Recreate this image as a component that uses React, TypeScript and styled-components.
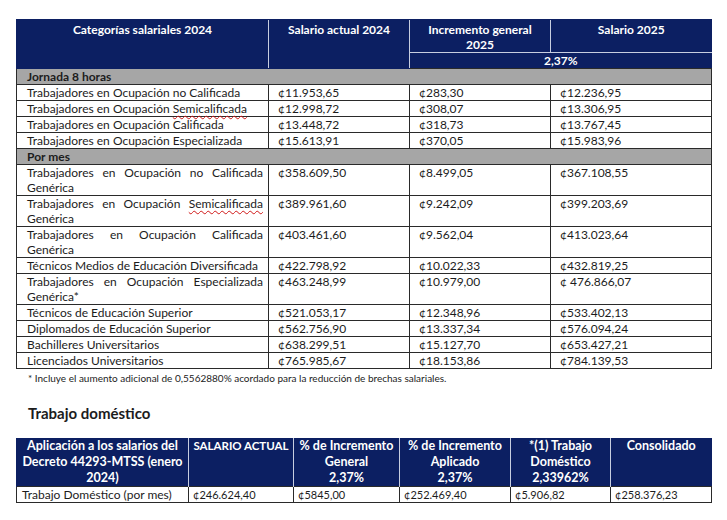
import React from "react";
import styled, { createGlobalStyle } from "styled-components";

const NAVY = "#0c1f62";
const RULE = "#2a2a2a";

const GlobalStyle = createGlobalStyle`
  body {
    margin: 0;
    background: #ffffff;
    font-family: Lato, "Liberation Sans", sans-serif;
    color: #1c1c1c;
  }
`;

const Page = styled.div`
  width: 695px;
  padding: 19px 16px 0 16px;
`;

const Table = styled.table`
  width: 695px;
  border-collapse: collapse;
  table-layout: fixed;
`;

const HeadCell = styled.th<{ $split?: boolean }>`
  background: ${NAVY};
  color: #ffffff;
  font-weight: 700;
  font-size: 12px;
  line-height: 15px;
  text-align: center;
  vertical-align: top;
  padding: 2px 4px 0;
  border-left: 1px solid #c7cde0;
  border-top: 1px solid ${NAVY};
  border-bottom: 1px solid ${props => (props.$split ? "#c7cde0" : NAVY)};
  &:first-child {
    border-left: 1px solid ${NAVY};
  }
`;

const RateCell = styled.th`
  background: ${NAVY};
  color: #ffffff;
  font-weight: 700;
  font-size: 12px;
  line-height: 15px;
  height: 15px;
  text-align: center;
  padding: 0;
  border-left: 1px solid #c7cde0;
  border-bottom: 1px solid ${RULE};
`;

const SectionCell = styled.td`
  background: #a6a6a6;
  font-weight: 700;
  font-size: 12px;
  line-height: 15px;
  height: 15px;
  padding: 0 0 0 10px;
  border: 1px solid ${RULE};
`;

const Cell = styled.td<{ $tall?: boolean }>`
  font-size: 12px;
  line-height: 15px;
  height: ${props => (props.$tall ? "30px" : "15px")};
  padding: 0 5px 0 9px;
  vertical-align: top;
  border: 1px solid ${RULE};
  white-space: nowrap;
`;

const LabelCell = styled(Cell)`
  padding-left: 10px;
  white-space: normal;
`;

const Spread = styled.div`
  text-align: justify;
  text-align-last: justify;
`;

const Typo = styled.span`
  text-decoration: underline wavy #d01818;
  text-decoration-thickness: 1px;
  text-underline-offset: 2px;
`;

const Footnote = styled.p`
  margin: 2px 0 0 12px;
  font-size: 10px;
  line-height: 14px;
`;

const Heading = styled.h2`
  margin: 18px 0 0 12px;
  font-size: 15px;
  line-height: 20px;
  font-weight: 700;
`;

const DomHead = styled.th<{ $single?: boolean }>`
  background: ${NAVY};
  color: #ffffff;
  font-weight: 700;
  font-size: ${props => (props.$single ? "11.5px" : "12.5px")};
  line-height: 16px;
  height: 48px;
  text-align: center;
  vertical-align: top;
  padding: 0 ${props => (props.$single ? "0" : "3px")};
  white-space: ${props => (props.$single ? "nowrap" : "normal")};
  border-left: 1px solid #c7cde0;
  &:first-child {
    border-left: 1px solid ${NAVY};
  }
`;

const DomCell = styled.td<{ $label?: boolean }>`
  font-size: ${props => (props.$label ? "12px" : "11px")};
  line-height: 15px;
  height: 15px;
  padding: 0 0 0 ${props => (props.$label ? "5px" : "4px")};
  border: 1px solid ${RULE};
  white-space: nowrap;
`;

const DomesticTable = styled(Table)`
  margin-top: 15px;
`;

type Row = { label: React.ReactNode; tail?: string; a: string; b: string; c: string };

const daily: Row[] = [
  { label: "Trabajadores en Ocupación no Calificada", a: "¢11.953,65", b: "¢283,30", c: "¢12.236,95" },
  { label: <>Trabajadores en Ocupación <Typo>Semicalificada</Typo></>, a: "¢12.998,72", b: "¢308,07", c: "¢13.306,95" },
  { label: "Trabajadores en Ocupación Calificada", a: "¢13.448,72", b: "¢318,73", c: "¢13.767,45" },
  { label: "Trabajadores en Ocupación Especializada", a: "¢15.613,91", b: "¢370,05", c: "¢15.983,96" },
];

const monthly: Row[] = [
  { label: "Trabajadores en Ocupación no Calificada", tail: "Genérica", a: "¢358.609,50", b: "¢8.499,05", c: "¢367.108,55" },
  { label: <>Trabajadores en Ocupación <Typo>Semicalificada</Typo></>, tail: "Genérica", a: "¢389.961,60", b: "¢9.242,09", c: "¢399.203,69" },
  { label: "Trabajadores en Ocupación Calificada", tail: "Genérica", a: "¢403.461,60", b: "¢9.562,04", c: "¢413.023,64" },
  { label: "Técnicos Medios de Educación Diversificada", a: "¢422.798,92", b: "¢10.022,33", c: "¢432.819,25" },
  { label: "Trabajadores en Ocupación Especializada", tail: "Genérica*", a: "¢463.248,99", b: "¢10.979,00", c: "¢ 476.866,07" },
  { label: "Técnicos de Educación Superior", a: "¢521.053,17", b: "¢12.348,96", c: "¢533.402,13" },
  { label: "Diplomados de Educación Superior", a: "¢562.756,90", b: "¢13.337,34", c: "¢576.094,24" },
  { label: "Bachilleres Universitarios", a: "¢638.299,51", b: "¢15.127,70", c: "¢653.427,21" },
  { label: "Licenciados Universitarios", a: "¢765.985,67", b: "¢18.153,86", c: "¢784.139,53" },
];

const SalaryRow: React.FC<{ row: Row }> = ({ row }) => (
  <tr>
    {row.tail ? (
      <LabelCell $tall>
        <Spread>{row.label}</Spread>
        {row.tail}
      </LabelCell>
    ) : (
      <LabelCell>{row.label}</LabelCell>
    )}
    <Cell $tall={!!row.tail}>{row.a}</Cell>
    <Cell $tall={!!row.tail}>{row.b}</Cell>
    <Cell $tall={!!row.tail}>{row.c}</Cell>
  </tr>
);

export default function App() {
  return (
    <Page>
      <GlobalStyle />
      <Table>
        <colgroup>
          <col style={{ width: 252 }} />
          <col style={{ width: 141 }} />
          <col style={{ width: 141 }} />
          <col style={{ width: 161 }} />
        </colgroup>
        <thead>
          <tr>
            <HeadCell rowSpan={2}>Categorías salariales 2024</HeadCell>
            <HeadCell rowSpan={2}>Salario actual 2024</HeadCell>
            <HeadCell $split style={{ height: 28 }}>Incremento general 2025</HeadCell>
            <HeadCell $split>Salario 2025</HeadCell>
          </tr>
          <tr>
            <RateCell colSpan={2}>2,37%</RateCell>
          </tr>
        </thead>
        <tbody>
          <tr>
            <SectionCell colSpan={4}>Jornada 8 horas</SectionCell>
          </tr>
          {daily.map((row, i) => (
            <SalaryRow key={"d" + i} row={row} />
          ))}
          <tr>
            <SectionCell colSpan={4}>Por mes</SectionCell>
          </tr>
          {monthly.map((row, i) => (
            <SalaryRow key={"m" + i} row={row} />
          ))}
        </tbody>
      </Table>
      <Footnote>
        * Incluye el aumento adicional de 0,5562880% acordado para la reducción de brechas salariales.
      </Footnote>

      <Heading>Trabajo doméstico</Heading>

      <DomesticTable>
        <colgroup>
          <col style={{ width: 172 }} />
          <col style={{ width: 105 }} />
          <col style={{ width: 106 }} />
          <col style={{ width: 111 }} />
          <col style={{ width: 100 }} />
          <col style={{ width: 101 }} />
        </colgroup>
        <thead>
          <tr>
            <DomHead>Aplicación a los salarios del Decreto 44293-MTSS (enero 2024)</DomHead>
            <DomHead $single>SALARIO ACTUAL</DomHead>
            <DomHead>
              % de Incremento General
              <br />
              2,37%
            </DomHead>
            <DomHead>
              % de Incremento Aplicado
              <br />
              2,37%
            </DomHead>
            <DomHead>
              *(1) Trabajo Doméstico
              <br />
              2,33962%
            </DomHead>
            <DomHead>Consolidado</DomHead>
          </tr>
        </thead>
        <tbody>
          <tr>
            <DomCell $label>Trabajo Doméstico (por mes)</DomCell>
            <DomCell>¢246.624,40</DomCell>
            <DomCell>¢5845,00</DomCell>
            <DomCell>¢252.469,40</DomCell>
            <DomCell>¢5.906,82</DomCell>
            <DomCell>¢258.376,23</DomCell>
          </tr>
        </tbody>
      </DomesticTable>
    </Page>
  );
}
